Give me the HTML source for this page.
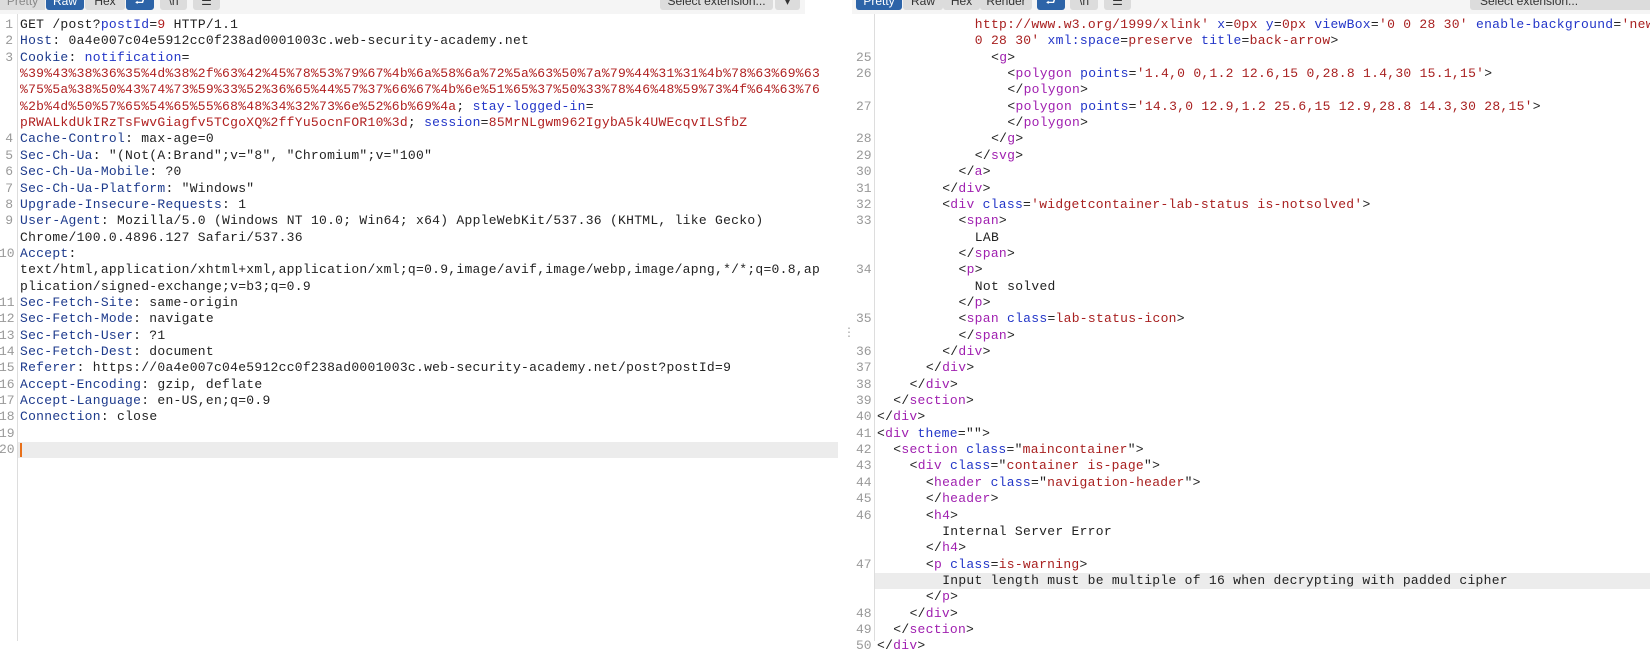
<!DOCTYPE html>
<html><head><meta charset="utf-8"><style>
body{margin:0;width:1650px;height:641px;background:#fff;position:relative;overflow:hidden;font-family:"Liberation Mono",monospace;font-size:13px;letter-spacing:0.28px;color:#222}
.tb{position:absolute;top:0;height:14px;background:#f5f5f5}
.b{position:absolute;top:-6px;height:16px;background:#dcdcdc;border-radius:3px;font-family:"Liberation Sans",sans-serif;font-size:12px;letter-spacing:0;color:#333;text-align:center;line-height:14px;overflow:hidden}
.bl{background:#2d64a8;color:#fff}
.r{position:absolute;height:16.35px;line-height:16.35px;white-space:pre}
.n{position:absolute;width:14px;text-align:right;color:#999;height:16.35px;line-height:16.35px;letter-spacing:0}
.k{color:#1d3a8c}.p{color:#2235c8}.v{color:#b02020}
.t{color:#a020b0}.a{color:#2235c8}.s{color:#a82020}
</style></head><body>
<div class="tb" style="left:0;width:805px"></div>
<div class="tb" style="left:852px;width:798px"></div>
<div class="b" style="left:0;width:45px;border-radius:0 0 0 0;color:#888">Pretty</div>
<div class="b bl" style="left:46px;width:38px">Raw</div>
<div class="b" style="left:85px;width:40px">Hex</div>
<div class="b bl" style="left:126px;width:28px">⮐</div>
<div class="b" style="left:160px;width:27px">\n</div>
<div class="b" style="left:193px;width:27px">☰</div>
<div class="b" style="left:660px;width:113px">Select extension...</div>
<div class="b" style="left:775px;width:25px">▾</div>
<div class="b bl" style="left:856px;width:46px">Pretty</div>
<div class="b" style="left:903px;width:40px">Raw</div>
<div class="b" style="left:943px;width:37px">Hex</div>
<div class="b" style="left:980px;width:52px">Render</div>
<div class="b bl" style="left:1037px;width:28px">⮐</div>
<div class="b" style="left:1070px;width:28px">\n</div>
<div class="b" style="left:1104px;width:27px">☰</div>
<div class="b" style="left:1470px;width:180px;text-align:left;padding-left:10px">Select extension...</div>
<div style="position:absolute;left:17px;top:14px;width:1px;height:627px;background:#ddd"></div>
<div style="position:absolute;left:874px;top:14px;width:1px;height:627px;background:#ddd"></div>
<div style="position:absolute;left:18px;top:442px;width:820px;height:16px;background:#ececec"></div>
<div style="position:absolute;left:20px;top:443px;width:2px;height:14px;background:#e8701a"></div>
<div style="position:absolute;left:875px;top:573px;width:775px;height:16px;background:#ececec"></div>
<div style="position:absolute;left:846px;top:328px;color:#999;font-size:10px;line-height:4px;letter-spacing:0">·<br>·<br>·</div>

<div id="L"></div><div id="R"></div>
<script>
function rows(rows,x0,nx,id){let h='';rows.forEach((r,i)=>{const top=17+16.35*i;if(r[0]!=='')h+=`<div class="n" style="left:${nx}px;top:${top}px">${r[0]}</div>`;h+=`<div class="r" style="left:${x0+(r[2]||0)}px;top:${top}px">${r[1]}</div>`});document.getElementById(id).innerHTML=h}
const L=[
['1','GET /post?<span class="p">postId</span>=<span class="v">9</span> HTTP/1.1'],
['2','<span class="k">Host</span>: 0a4e007c04e5912cc0f238ad0001003c.web-security-academy.net'],
['3','<span class="k">Cookie</span>: <span class="p">notification</span>='],
['','<span class="v">%39%43%38%36%35%4d%38%2f%63%42%45%78%53%79%67%4b%6a%58%6a%72%5a%63%50%7a%79%44%31%31%4b%78%63%69%63</span>'],
['','<span class="v">%75%5a%38%50%43%74%73%59%33%52%36%65%44%57%37%66%67%4b%6e%51%65%37%50%33%78%46%48%59%73%4f%64%63%76</span>'],
['','<span class="v">%2b%4d%50%57%65%54%65%55%68%48%34%32%73%6e%52%6b%69%4a</span>; <span class="p">stay-logged-in</span>='],
['','<span class="v">pRWALkdUkIRzTsFwvGiagfv5TCgoXQ%2ffYu5ocnFOR10%3d</span>; <span class="p">session</span>=<span class="v">85MrNLgwm962IgybA5k4UWEcqvILSfbZ</span>'],
['4','<span class="k">Cache-Control</span>: max-age=0'],
['5','<span class="k">Sec-Ch-Ua</span>: "(Not(A:Brand";v="8", "Chromium";v="100"'],
['6','<span class="k">Sec-Ch-Ua-Mobile</span>: ?0'],
['7','<span class="k">Sec-Ch-Ua-Platform</span>: "Windows"'],
['8','<span class="k">Upgrade-Insecure-Requests</span>: 1'],
['9','<span class="k">User-Agent</span>: Mozilla/5.0 (Windows NT 10.0; Win64; x64) AppleWebKit/537.36 (KHTML, like Gecko)'],
['','Chrome/100.0.4896.127 Safari/537.36'],
['10','<span class="k">Accept</span>:'],
['','text/html,application/xhtml+xml,application/xml;q=0.9,image/avif,image/webp,image/apng,*/*;q=0.8,ap'],
['','plication/signed-exchange;v=b3;q=0.9'],
['11','<span class="k">Sec-Fetch-Site</span>: same-origin'],
['12','<span class="k">Sec-Fetch-Mode</span>: navigate'],
['13','<span class="k">Sec-Fetch-User</span>: ?1'],
['14','<span class="k">Sec-Fetch-Dest</span>: document'],
['15','<span class="k">Referer</span>: https://0a4e007c04e5912cc0f238ad0001003c.web-security-academy.net/post?postId=9'],
['16','<span class="k">Accept-Encoding</span>: gzip, deflate'],
['17','<span class="k">Accept-Language</span>: en-US,en;q=0.9'],
['18','<span class="k">Connection</span>: close'],
['19',''],['20','']];
rows(L,20,-1,'L');
const I=n=>n*16.3;
const t=(s)=>'&lt;<span class="t">'+s+'</span>',c=(s)=>'&lt;/<span class="t">'+s+'</span>&gt;';
const R=[
['','<span class="s">http://www.w3.org/1999/xlink\'</span> <span class="a">x</span>=<span class="s">0px</span> <span class="a">y</span>=<span class="s">0px</span> <span class="a">viewBox</span>=<span class="s">\'0 0 28 30\'</span> <span class="a">enable-background</span>=<span class="s">\'new</span>',I(6)],
['','<span class="s">0 28 30\'</span> <span class="a">xml:space</span>=<span class="s">preserve</span> <span class="a">title</span>=<span class="s">back-arrow</span>&gt;',I(6)],
['25',t('g')+'&gt;',I(7)],
['26',t('polygon')+' <span class="a">points</span>=<span class="s">\'1.4,0 0,1.2 12.6,15 0,28.8 1.4,30 15.1,15\'</span>&gt;',I(8)],
['',c('polygon'),I(8)],
['27',t('polygon')+' <span class="a">points</span>=<span class="s">\'14.3,0 12.9,1.2 25.6,15 12.9,28.8 14.3,30 28,15\'</span>&gt;',I(8)],
['',c('polygon'),I(8)],
['28',c('g'),I(7)],['29',c('svg'),I(6)],['30',c('a'),I(5)],['31',c('div'),I(4)],
['32',t('div')+' <span class="a">class</span>=<span class="s">\'widgetcontainer-lab-status is-notsolved\'</span>&gt;',I(4)],
['33',t('span')+'&gt;',I(5)],['','LAB',I(6)],['',c('span'),I(5)],
['34',t('p')+'&gt;',I(5)],['','Not solved',I(6)],['',c('p'),I(5)],
['35',t('span')+' <span class="a">class</span>=<span class="s">lab-status-icon</span>&gt;',I(5)],['',c('span'),I(5)],
['36',c('div'),I(4)],['37',c('div'),I(3)],['38',c('div'),I(2)],['39',c('section'),I(1)],['40',c('div'),0],
['41',t('div')+' <span class="a">theme</span>=""&gt;',0],
['42',t('section')+' <span class="a">class</span>="<span class="s">maincontainer</span>"&gt;',I(1)],
['43',t('div')+' <span class="a">class</span>="<span class="s">container is-page</span>"&gt;',I(2)],
['44',t('header')+' <span class="a">class</span>="<span class="s">navigation-header</span>"&gt;',I(3)],
['45',c('header'),I(3)],['46',t('h4')+'&gt;',I(3)],['','Internal Server Error',I(4)],['',c('h4'),I(3)],
['47',t('p')+' <span class="a">class</span>=<span class="s">is-warning</span>&gt;',I(3)],
['','Input length must be multiple of 16 when decrypting with padded cipher',I(4)],['',c('p'),I(3)],
['48',c('div'),I(2)],['49',c('section'),I(1)],['50',c('div'),0]];
rows(R,877,856,'R');
</script>
</body></html>
